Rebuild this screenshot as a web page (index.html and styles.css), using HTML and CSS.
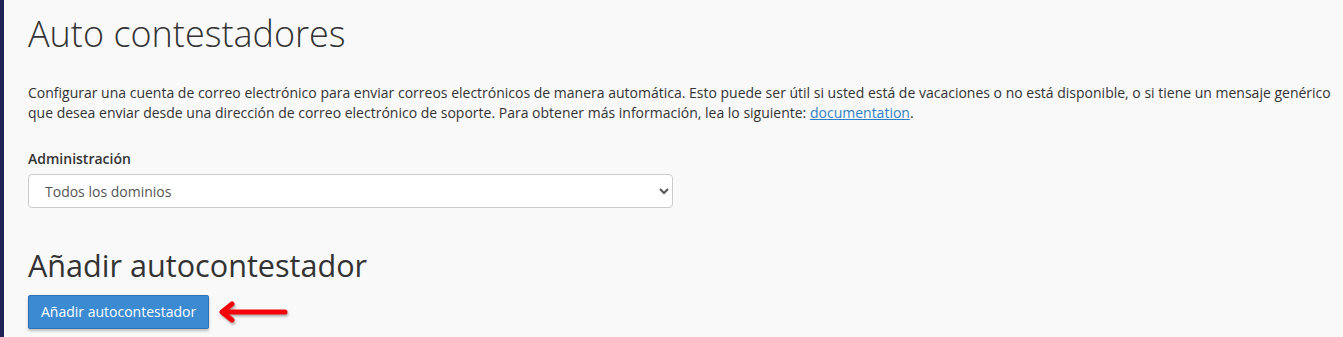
FILE: index.html
```html
<!DOCTYPE html>
<html lang="es">
<head>
  <meta charset="UTF-8">
  <title>Auto contestadores</title>
  <link rel="stylesheet" href="styles.css">
</head>
<body>
  <div class="layout">
    <aside class="sidebar"></aside>

    <main class="content">
      <h1>Auto contestadores</h1>

      <p class="description">
        Configurar una cuenta de correo electrónico para enviar correos electrónicos de manera automática. Esto puede ser útil si usted está de vacaciones o no está disponible, o si tiene un mensaje genérico que desea enviar desde una dirección de correo electrónico de soporte. Para obtener más información, lea lo siguiente: <a href="#">documentation</a>.
      </p>

      <div class="form-group">
        <label for="domain">Administración</label>
        <select id="domain">
          <option>Todos los dominios</option>
        </select>
      </div>

      <h2>Añadir autocontestador</h2>

      <div class="actions">
        <button class="btn-primary">Añadir autocontestador</button>
        <!-- flecha de anotación -->
        <svg class="arrow" width="76" height="26" viewBox="0 0 76 26">
          <path d="M68 13 H6 M15 5 L5 13 L15 21" fill="none" stroke="#f5000a" stroke-width="5" stroke-linecap="round" stroke-linejoin="round"/>
        </svg>
      </div>
    </main>
  </div>
</body>
</html>
```

FILE: styles.css
```css
* {
  margin: 0;
  padding: 0;
  box-sizing: border-box;
}

html,
body {
  height: 100%;
}

body {
  font-family: 'Open Sans', 'Noto Sans', sans-serif;
  font-size: 14px;
  line-height: 1.42857;
  color: #333;
  background: #f9f9f9;
}

.layout {
  display: flex;
  height: 100%;
}

.sidebar {
  width: 4px;
  flex-shrink: 0;
  background: #1d2354;
}

.content {
  flex: 1;
  padding: 12px 12px 0 24px;
}

h1 {
  font-size: 36px;
  font-weight: 300;
  line-height: 1.2;
  margin-bottom: 28px;
}

.description {
  margin-bottom: 26px;
}

.description a {
  color: #2f7fc6;
  text-decoration: underline;
}

.form-group label {
  display: block;
  font-weight: 600;
  margin-bottom: 5px;
}

.form-group select {
  width: 645px;
  height: 34px;
  padding: 0 12px;
  font-family: inherit;
  font-size: 14px;
  color: #555;
  background: #fff;
  border: 1px solid #ccc;
  border-radius: 4px;
}

h2 {
  font-size: 30.6px;
  font-weight: 400;
  line-height: 1.1;
  margin-top: 41px;
  margin-bottom: 12px;
}

.actions {
  display: flex;
  align-items: center;
  gap: 8px;
}

.btn-primary {
  height: 34px;
  padding: 0 12px;
  font-family: inherit;
  font-size: 14px;
  color: #fff;
  background: #3b8ad2;
  border: 1px solid #2f73b4;
  border-radius: 2px;
  box-shadow: 0 2px 3px rgba(0, 0, 0, 0.25);
  cursor: pointer;
}

.arrow {
  filter: drop-shadow(1px 2px 1px rgba(0, 0, 0, 0.3));
}
```
